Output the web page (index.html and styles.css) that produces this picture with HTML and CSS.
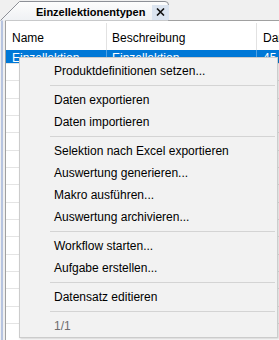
FILE: index.html
```html
<html>

<head>
  <link rel="stylesheet" href="styles.css">
</head>

<body>
  <div class="window">
    <div class="tabstrip">
      <div class="tab">
        <svg class="tab-shape" width="170" height="21" viewBox="0 0 170 21">
          <defs>
            <linearGradient id="tabfill" x1="0" y1="0" x2="0" y2="1">
              <stop offset="0" stop-color="#fdfdfd" />
              <stop offset="1" stop-color="#eff1f4" />
            </linearGradient>
          </defs>
          <path d="M0.5 20.5 L19.5 1.5 H165 Q168.5 1.5 168.5 5 V20.5" fill="url(#tabfill)" stroke="#8d9097" />
        </svg>
        <span class="tab-title">Einzellektionentypen</span>
        <span class="tab-close">
          <svg width="9" height="8" viewBox="0 0 9 8">
            <path d="M1 0.5 L8 7.5 M8 0.5 L1 7.5" stroke="#111" stroke-width="1.6" />
          </svg>
        </span>
      </div>
    </div>
    <div class="workspace">
      <div class="focus-bar"></div>
      <div class="grid">
        <div class="grid-head">
          <div class="col col-name">Name</div>
          <div class="col col-desc">Beschreibung</div>
          <div class="col col-dur">Dauer</div>
        </div>
        <div class="grid-body">
          <div class="row selected">
            <div class="col col-name">Einzellektion</div>
            <div class="col col-desc">Einzellektion</div>
            <div class="col col-dur">45</div>
          </div>
          <div class="row"></div>
          <div class="row"></div>
          <div class="row"></div>
          <div class="row"></div>
          <div class="row"></div>
          <div class="row"></div>
          <div class="row"></div>
          <div class="row"></div>
          <div class="row"></div>
          <div class="row"></div>
          <div class="row"></div>
          <div class="row"></div>
          <div class="row"></div>
          <div class="row"></div>
          <div class="row"></div>
          <div class="row"></div>
        </div>
      </div>
    </div>

    <div class="menu">
      <div class="menu-item">Produktdefinitionen setzen...</div>
      <div class="menu-sep"></div>
      <div class="menu-item">Daten exportieren</div>
      <div class="menu-item">Daten importieren</div>
      <div class="menu-sep"></div>
      <div class="menu-item">Selektion nach Excel exportieren</div>
      <div class="menu-item">Auswertung generieren...</div>
      <div class="menu-item">Makro ausführen...</div>
      <div class="menu-item">Auswertung archivieren...</div>
      <div class="menu-sep"></div>
      <div class="menu-item">Workflow starten...</div>
      <div class="menu-item">Aufgabe erstellen...</div>
      <div class="menu-sep"></div>
      <div class="menu-item">Datensatz editieren</div>
      <div class="menu-sep"></div>
      <div class="menu-item disabled">1/1</div>
    </div>
  </div>
</body>

</html>
```

FILE: styles.css
```css
:root {
  --border: #a0a0a0;
  --grid-line: #e4e4e4;
  --select: #0078d7;
}

* {
  margin: 0;
  padding: 0;
  box-sizing: border-box;
}

body {
  background: #f0f0f0;
  font-family: "Liberation Sans", Arial, sans-serif;
  font-size: 12px;
  color: #000;
  overflow: hidden;
}

.window {
  position: relative;
  width: 279px;
  height: 340px;
  display: flex;
  flex-direction: column;
}

/* tab strip */

.tabstrip {
  height: 20px;
  flex: none;
  display: flex;
}

.tab {
  position: relative;
  width: 170px;
  height: 20px;
  display: flex;
  align-items: center;
  padding: 4px 0 0 36px;
}

.tab-shape {
  position: absolute;
  left: 0;
  top: 0;
}

.tab-title {
  position: relative;
  font-weight: 700;
  font-size: 11px;
  white-space: nowrap;
}

.tab-close {
  position: relative;
  display: flex;
  align-items: center;
  justify-content: center;
  width: 17px;
  height: 15px;
  margin-left: 7px;
  background: #dbe4f0;
}

/* grid */

.workspace {
  flex: 1;
  display: flex;
  padding-left: 1px;
  min-height: 0;
}

.focus-bar {
  width: 2px;
  flex: none;
  background: #b7c4e0;
  margin-right: 2px;
}

.grid {
  flex: 1;
  background: #fff;
  border-top: 1px solid var(--border);
  border-left: 1px solid var(--border);
  overflow: hidden;
}

.grid-head {
  display: flex;
  height: 29px;
}

.grid-head .col {
  padding-top: 7px;
  line-height: 16px;
  border-right: 1px solid #e2e2e2;
  margin-top: 2px;
}

.col {
  flex: none;
  padding: 0 5px 0 6px;
  white-space: nowrap;
  overflow: hidden;
}

.col-name {
  width: 101px;
}

.col-desc {
  width: 150px;
  padding-left: 5px;
}

.col-dur {
  width: 60px;
}

.row {
  display: flex;
  height: 17.33px;
  border-top: 1px solid var(--grid-line);
}

.row.selected {
  height: 13px;
  border-top: none;
  background: var(--select);
  color: #fff;
  line-height: 17px;
}

.row.selected .col {
  border-right: 1px solid #4fa0e2;
}

/* context menu */

.menu {
  position: absolute;
  left: 19px;
  top: 57px;
  width: 259px;
  height: 281px;
  background: #f2f2f2;
  border: 1px solid #cccccc;
  box-shadow: 1px 1px 2px rgba(0, 0, 0, 0.18);
  padding: 2px 2px 0;
}

.menu-item {
  height: 22px;
  line-height: 22px;
  padding-left: 32px;
  white-space: nowrap;
}

.menu-item.disabled {
  color: #6d6d6d;
}

.menu-sep {
  height: 1px;
  margin: 3px 0 3px 28px;
  background: #d4d4d4;
}
```
